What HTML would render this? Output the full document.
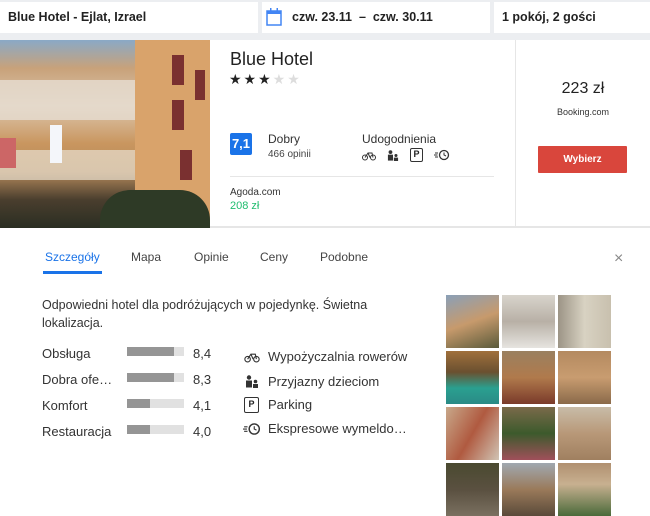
<!DOCTYPE html>
<html><head><meta charset="utf-8"><style>
*{margin:0;padding:0;box-sizing:border-box}
body{width:650px;height:516px;overflow:hidden;background:#fff;font-family:"Liberation Sans",Arial,sans-serif;color:#222;position:relative}
.a{position:absolute}
.top{left:0;top:0;width:650px;height:40px;background:#eceef1}
.box{background:#fff;top:2px;height:31px;font-size:12.5px;font-weight:bold;color:#222;line-height:31px;padding-left:8px}
.card{left:0;top:40px;width:650px;height:188px;background:#fff;border-bottom:2px solid #e6e6e6}
.tab{font-size:12px;color:#444;top:250px}
.lbl{font-size:13px;color:#333;left:42px}
.bar{left:127px;width:57px;height:9px;background:#e1e1e1}
.bar i{display:block;height:9px;background:#959595}
.val{left:193px;font-size:13px;color:#333}
.am{left:268px;font-size:13px;color:#333}
.ph{width:53px;height:53px}
</style></head><body>
<div class="a top"></div>
<div class="a box" style="left:0;width:258px">Blue Hotel - Ejlat, Izrael</div>
<div class="a box" style="left:262px;width:228px;padding-left:30px">czw. 23.11&nbsp; – &nbsp;czw. 30.11</div>
<svg class="a" style="left:266px;top:8px" width="16" height="18" viewBox="0 0 16 18"><rect x="1" y="3" width="14" height="14" fill="none" stroke="#4285f4" stroke-width="1.5"/><rect x="1" y="3" width="14" height="3" fill="#4285f4"/><rect x="4" y="0" width="1.5" height="4" fill="#4285f4"/><rect x="10.5" y="0" width="1.5" height="4" fill="#4285f4"/></svg>
<div class="a box" style="left:494px;width:156px;padding-left:8px">1 pokój, 2 gości</div>

<div class="a card"></div>
<div class="a" style="left:0;top:40px;width:210px;height:188px;overflow:hidden;background:linear-gradient(180deg,#8aa9c6 0%,#c8a27a 15%,#dcc6ad 35%,#c9965f 55%,#b58a5c 70%,#4a3e2e 85%,#2a2e22 100%)">
 <div class="a" style="left:0;top:40px;width:140px;height:40px;background:#e6ddd2;opacity:.8"></div>
 <div class="a" style="left:0;top:110px;width:170px;height:30px;background:#e8dfd0;opacity:.7"></div>
 <div class="a" style="left:135px;top:0;width:75px;height:188px;background:#d9a36b"></div>
 <div class="a" style="left:172px;top:15px;width:12px;height:30px;background:#7a3030"></div>
 <div class="a" style="left:195px;top:30px;width:10px;height:30px;background:#7a3030"></div>
 <div class="a" style="left:172px;top:60px;width:12px;height:30px;background:#7a3030"></div>
 <div class="a" style="left:180px;top:110px;width:12px;height:30px;background:#7a3030"></div>
 <div class="a" style="left:100px;top:150px;width:110px;height:38px;background:#2e3a26;border-radius:30px 30px 0 0"></div>
 <div class="a" style="left:50px;top:85px;width:12px;height:38px;background:#f4f6fa"></div>
 <div class="a" style="left:0;top:98px;width:16px;height:30px;background:#c66"></div>
</div>

<div class="a" style="left:230px;top:49px;font-size:18px;color:#222">Blue Hotel</div>
<div class="a" style="left:229px;top:71px;font-size:14px;letter-spacing:2px;color:#222">★★★<span style="color:#ddd">★★</span></div>
<div class="a" style="left:230px;top:133px;width:22px;height:22px;background:#1a73e8;color:#fff;font-size:13px;font-weight:bold;text-align:center;line-height:22px;border-radius:2px">7,1</div>
<div class="a" style="left:268px;top:132px;font-size:12px;color:#333">Dobry</div>
<div class="a" style="left:268px;top:149px;font-size:10px;color:#444">466 opinii</div>
<div class="a" style="left:362px;top:132px;font-size:12px;color:#333">Udogodnienia</div>
<svg class="a" style="left:362px;top:151px" width="14" height="10" viewBox="0 0 14 10"><circle cx="3" cy="6.5" r="2.5" fill="none" stroke="#333"/><circle cx="11" cy="6.5" r="2.5" fill="none" stroke="#333"/><path d="M3 6.5L6 2h4l1 4.5M6 2l2 4.5" fill="none" stroke="#333"/></svg>
<svg class="a" style="left:387px;top:150px" width="12" height="11" viewBox="0 0 14 13"><circle cx="4" cy="2.5" r="2.2" fill="#333"/><rect x="1" y="5.5" width="6" height="7" fill="#333"/><circle cx="10.5" cy="6.5" r="1.8" fill="#333"/><rect x="8" y="9" width="5" height="4" fill="#333"/></svg>
<div class="a" style="left:410px;top:148px;width:13px;height:14px;border:1.5px solid #333;border-radius:2px;font-weight:bold;font-size:9px;text-align:center;line-height:11px">P</div>
<svg class="a" style="left:434px;top:149px" width="16" height="12" viewBox="0 0 16 12"><circle cx="10" cy="6" r="4.5" fill="none" stroke="#333" stroke-width="1.3"/><path d="M10 3.5V6l2 1M1 4h3M0 6h3.5M1 8h3" stroke="#333" fill="none"/></svg>
<div class="a" style="left:230px;top:176px;width:264px;height:1px;background:#e6e6e6"></div>
<div class="a" style="left:230px;top:187px;font-size:10px;color:#333">Agoda.com</div>
<div class="a" style="left:230px;top:200px;font-size:11px;color:#1fbd6e">208 zł</div>
<div class="a" style="left:515px;top:40px;width:1px;height:188px;background:#e6e6e6"></div>
<div class="a" style="left:516px;top:80px;width:134px;text-align:center;font-size:16px;color:#222">223 zł</div>
<div class="a" style="left:516px;top:107px;width:134px;text-align:center;font-size:9px;color:#333">Booking.com</div>
<div class="a" style="left:538px;top:146px;width:89px;height:27px;background:#d9463c;color:#fff;font-size:10px;font-weight:bold;text-align:center;line-height:27px;border-radius:1px">Wybierz</div>

<div class="a tab" style="left:45px;color:#1a73e8">Szczegóły</div>
<div class="a" style="left:43px;top:271px;width:59px;height:3px;background:#1a73e8"></div>
<div class="a tab" style="left:131px">Mapa</div>
<div class="a tab" style="left:194px">Opinie</div>
<div class="a tab" style="left:260px">Ceny</div>
<div class="a tab" style="left:320px">Podobne</div>
<div class="a" style="left:614px;top:250px;font-size:16px;color:#888">×</div>

<div class="a" style="left:42px;top:296px;width:345px;font-size:12.5px;line-height:18px;color:#333">Odpowiedni hotel dla podróżujących w pojedynkę. Świetna lokalizacja.</div>
<div class="a lbl" style="top:346px">Obsługa</div><div class="a bar" style="top:347px"><i style="width:47px"></i></div><div class="a val" style="top:346px">8,4</div>
<div class="a lbl" style="top:372px">Dobra ofe…</div><div class="a bar" style="top:373px"><i style="width:47px"></i></div><div class="a val" style="top:372px">8,3</div>
<div class="a lbl" style="top:398px">Komfort</div><div class="a bar" style="top:399px"><i style="width:23px"></i></div><div class="a val" style="top:398px">4,1</div>
<div class="a lbl" style="top:424px">Restauracja</div><div class="a bar" style="top:425px"><i style="width:23px"></i></div><div class="a val" style="top:424px">4,0</div>

<svg class="a" style="left:244px;top:352px" width="16" height="11" viewBox="0 0 14 10"><circle cx="3" cy="6.5" r="2.5" fill="none" stroke="#333"/><circle cx="11" cy="6.5" r="2.5" fill="none" stroke="#333"/><path d="M3 6.5L6 2h4l1 4.5M6 2l2 4.5" fill="none" stroke="#333"/></svg>
<div class="a am" style="top:349px">Wypożyczalnia rowerów</div>
<svg class="a" style="left:245px;top:375px" width="14" height="13" viewBox="0 0 14 13"><circle cx="4" cy="2.5" r="2.2" fill="#333"/><rect x="1" y="5.5" width="6" height="7" fill="#333"/><circle cx="10.5" cy="6.5" r="1.8" fill="#333"/><rect x="8" y="9" width="5" height="4" fill="#333"/></svg>
<div class="a am" style="top:374px">Przyjazny dzieciom</div>
<div class="a" style="left:244px;top:397px;width:15px;height:16px;border:1.5px solid #333;border-radius:2px;font-size:9px;font-weight:bold;text-align:center;line-height:13px">P</div>
<div class="a am" style="top:397px">Parking</div>
<svg class="a" style="left:243px;top:422px" width="18" height="14" viewBox="0 0 16 12"><circle cx="10" cy="6" r="4.5" fill="none" stroke="#333" stroke-width="1.3"/><path d="M10 3.5V6l2 1M1 4h3M0 6h3.5M1 8h3" stroke="#333" fill="none"/></svg>
<div class="a am" style="top:421px">Ekspresowe wymeldo…</div>

<div class="a ph" style="left:446px;top:295px;background:linear-gradient(160deg,#8aa0b8,#c79a6c 50%,#5a5a3a)"></div>
<div class="a ph" style="left:502px;top:295px;background:linear-gradient(180deg,#d8d4cc,#b8b0a6 50%,#e6e4e0)"></div>
<div class="a ph" style="left:558px;top:295px;background:linear-gradient(90deg,#9c9486,#d8d2c2 50%,#c8c0ae)"></div>
<div class="a ph" style="left:446px;top:351px;background:linear-gradient(180deg,#a0703c,#6a5030 40%,#2aa090 70%,#2a8a86)"></div>
<div class="a ph" style="left:502px;top:351px;background:linear-gradient(180deg,#9a8060,#b07a4c 50%,#7a3a2a)"></div>
<div class="a ph" style="left:558px;top:351px;background:linear-gradient(180deg,#b48a60,#c89c70 50%,#8a6a4a)"></div>
<div class="a ph" style="left:446px;top:407px;background:linear-gradient(120deg,#c8a88a,#b05a40 50%,#d0c4b4)"></div>
<div class="a ph" style="left:502px;top:407px;background:linear-gradient(180deg,#7a6a4a,#3c5a2c 50%,#a0505a)"></div>
<div class="a ph" style="left:558px;top:407px;background:linear-gradient(180deg,#c8bca8,#b89878 50%,#a08060)"></div>
<div class="a ph" style="left:446px;top:463px;background:linear-gradient(180deg,#4a4a30,#5a5040 50%,#7a7060)"></div>
<div class="a ph" style="left:502px;top:463px;background:linear-gradient(180deg,#a0a8b0,#9a7a5a 50%,#5a4a3a)"></div>
<div class="a ph" style="left:558px;top:463px;background:linear-gradient(180deg,#b09070,#c8b090 40%,#4a6a3a)"></div>
</body></html>
